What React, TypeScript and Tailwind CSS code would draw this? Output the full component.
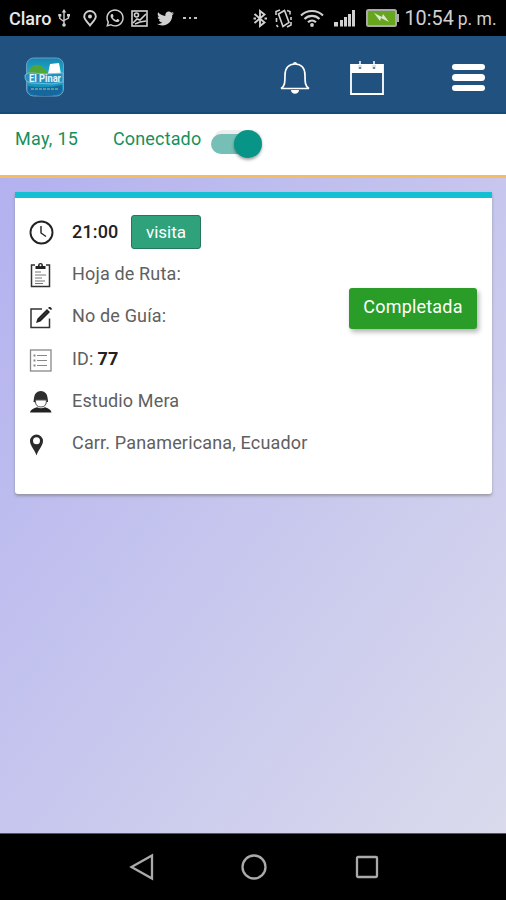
import type { ReactNode } from 'react';
import { FaWhatsapp, FaTwitter } from 'react-icons/fa';

function StatusBar() {
  return (
    <div className="flex h-9 items-center bg-black text-[#d0d0d0]">
      <span className="ml-[9px] w-[47px] pt-[2px] text-[18px] font-medium leading-none whitespace-nowrap text-[#e8e8e8]">Claro</span>
      <svg className="ml-[1px] h-[18px] w-[14px]" viewBox="0 0 14 18" fill="none" stroke="currentColor" strokeWidth="1.4">
        <path d="M7 3v12M2.8 6.5v3l4.2 3M11.5 6v3L7 11.5" />
        <path d="m7 0 2.3 3.5H4.7zM1.3 5h3v2.5h-3zM10 5h3v2.5h-3z" fill="currentColor" stroke="none" />
        <circle cx="7" cy="16" r="1.8" fill="currentColor" stroke="none" />
      </svg>
      <svg className="ml-[12px] h-[17px] w-[14px]" viewBox="0 0 14 17" fill="none" stroke="currentColor" strokeWidth="1.9">
        <path d="M7 15.500C4.7 12.500 1.200 9.500 1.200 6.500a5.800 5.500 0 0 1 11.600 0c0 3-3.500 6-5.800 9Z" />
        <circle cx="7" cy="6.500" r="2" fill="currentColor" stroke="none" />
      </svg>
      <FaWhatsapp className="ml-[8px] size-[20px]" />
      <svg className="ml-[6px] size-[17px]" viewBox="0 0 17 17" fill="none" stroke="currentColor" strokeWidth="1.6">
        <rect x="1" y="1" width="15" height="15" />
        <circle cx="5.500" cy="5" r="2" />
        <path d="M2 13 6 9l3 1 6-6M4 14l5-2 6-1" />
      </svg>
      <FaTwitter className="ml-[9px] size-[17px]" />
      <span className="ml-[9px] flex gap-[3px]">
        <i className="size-[2.500px] bg-[#c0c0c0]" /><i className="size-[2.500px] bg-[#c0c0c0]" /><i className="size-[2.500px] bg-[#c0c0c0]" />
      </span>
      <svg className="ml-[56px] h-[19px] w-[14px]" viewBox="0 0 14 19" fill="none" stroke="currentColor" strokeWidth="1.900">
        <path d="m1.500 5 10 8.500L7 17V2l4.500 3.500L1.500 14" />
        <path d="M.5 9.500H3M11.500 9.500H14" strokeWidth="2" />
      </svg>
      <svg className="ml-[8px] h-[19px] w-[17px]" viewBox="0 0 17 19" fill="none" stroke="currentColor" strokeWidth="1.600">
        <path d="m3.500 5 6-3.500 4.500 12-6 4zM1 6V2.500L5 1M1.500 9v4M3 18l-1.500-2M12 1.500l3 1v3M16 8v3M12 18l4-2v-3" />
      </svg>
      <svg className="ml-[8px] h-[18px] w-[24px]" viewBox="0 0 24 18" fill="none" stroke="currentColor" strokeWidth="2.200">
        <path d="M1 6.500c6-6 16-6 22 0M4.500 10c4.200-4.200 10.800-4.200 15 0M8 13.300c2.300-2.200 5.700-2.200 8 0" />
        <circle cx="12" cy="16" r="1.900" fill="currentColor" stroke="none" />
      </svg>
      <svg className="ml-[10px] h-[18px] w-[22px]" viewBox="0 0 22 18" fill="currentColor">
        <path d="M0 13h4v4.500H0zM6 11h3v6.500H6zM10 8h3v9.500h-3zM14 5h3v12.500h-3zM18 1h3v16.500h-3z" />
      </svg>
      <svg className="ml-[10px] h-[18px] w-[33px]" viewBox="0 0 33 18">
        <rect x="1" y="1" width="29" height="16" rx="1.500" fill="#68a51e" stroke="#aaa" strokeWidth="2" />
        <path d="M31 5h2v8h-2z" fill="#aaa" />
        <path d="m8 4 8 4 1-3 6 8-8-4-1 3z" fill="#dce8d0" />
      </svg>
      <span className="ml-[6px] pt-[2px] text-[19.800px] leading-none whitespace-nowrap">10:54</span>
      <span className="ml-[4px] pt-[3px] text-[17.500px] leading-none whitespace-nowrap">p. m.</span>
    </div>
  );
}

function Logo() {
  return (
    <svg className="mt-[-1px] ml-[23px] h-[40px] w-[42px]" viewBox="0 0 42 40">
      <defs>
        <linearGradient id="sky" x2="0" y2="1"><stop stopColor="#1686b1" /><stop offset=".5" stopColor="#20b4d2" /><stop offset="1" stopColor="#146da6" /></linearGradient>
      </defs>
      <rect x="3.500" y="1" width="37" height="38" rx="7" fill="url(#sky)" stroke="#6a9fc4" />
      <path d="M5 16C9 5 18 5 25 16z" fill="#50a638" />
      <path d="m27 7 9-1 2 11H25z" fill="#fff" />
      <path d="M2 18q3-3 8-2l12 1 18-1v9l-11 2-19-1q-9 0-8-8Z" fill="#2590bf" stroke="#8ac5dd" strokeWidth=".8" />
      <text x="6" y="25" fontSize="10" fontWeight="700" fill="#e2f7fc" textLength="32" lengthAdjust="spacingAndGlyphs">El Pinar</text>
      <path d="M5 29q18 3 34-1v6q-4 5-17 5T5 34z" fill="#17679f" />
      <path d="M8 32h27" stroke="#579c99" strokeWidth="1.800" strokeDasharray="3 1" />
    </svg>
  );
}

function Header() {
  return (
    <header className="flex h-[78px] items-center border-b-2 border-[#114c7c] bg-[#21527f] pt-[7px] text-white">
      <Logo />
      <svg className="ml-[214px] h-[34px] w-[32px]" viewBox="0 0 32 34" fill="none" stroke="currentColor" strokeWidth="1.700">
        <path d="M2 27.500c4-2 4-7 4-13C6 7 10 3 16 3s10 4 10 11.500c0 6 0 11 4 13z" />
        <path d="M14 3a2 2 0 0 1 4 0M12 29h8c0 5-8 5-8 0Z" fill="currentColor" stroke="none" />
      </svg>
      <svg className="ml-[39px] h-[34px] w-[34px]" viewBox="0 0 34 34" fill="none">
        <path d="M1 4h32v29H1z" stroke="currentColor" strokeWidth="1.800" />
        <path d="M1 3h32v9H1z" fill="currentColor" />
        <path d="M10 4v4M24 4v4" stroke="#67849f" strokeWidth="2.400" />
        <path d="M10 0v6M24 0v6" stroke="#fff" strokeWidth="1.500" />
      </svg>
      <div className="ml-[68px] flex w-[33px] flex-col gap-[4px]">
        <i className="h-[6.500px] rounded-full bg-white" />
        <i className="h-[6.500px] rounded-full bg-white" />
        <i className="h-[6.500px] rounded-full bg-white" />
      </div>
    </header>
  );
}

function Row({ icon, children }: { icon: ReactNode; children: ReactNode }) {
  return (
    <div className="flex h-[42.200px] items-center">
      <div className="flex w-[43px] shrink-0 items-center">{icon}</div>
      <div className="flex items-center text-[18px] leading-none tracking-[0.160px] whitespace-nowrap text-[#606060]">{children}</div>
    </div>
  );
}

const clock = (
  <svg className="size-[25px]" viewBox="0 0 25 25" fill="none" stroke="#222">
    <circle cx="12.500" cy="12.500" r="11" strokeWidth="1.900" />
    <path d="M12 6v7l5 3.500" strokeWidth="1.400" />
  </svg>
);
const clipboard = (
  <svg className="mt-[2px] ml-[1px] h-[26px] w-[21px]" viewBox="0 0 21 26" fill="none" stroke="#333">
    <path d="M5 3H1.500v21.500h18V3H16" strokeWidth="1.500" />
    <path d="M5.500 7V4H8a2.500 3 0 0 1 5 0h2.500v3z" fill="#222" stroke="none" />
    <circle cx="10.500" cy="3.300" r="1" fill="#fff" stroke="none" />
    <path d="M5 10h6M5 13h11M5 16h7M5 19h10M5 21.500h8" stroke="#777" />
  </svg>
);
const edit = (
  <svg className="mt-[3px] ml-[1px] size-[22px]" viewBox="0 0 22 22" fill="none">
    <path d="M12 2H1v18.500h18.500v-9" stroke="#333" strokeWidth="1.500" />
    <path d="m6 16 1.500-4.500L17 2l3 3-9.500 9.500zM18 1l1-1q2-.5 3 2l-1 1z" fill="#222" />
    <path d="m9.500 12.500 8-8" stroke="#555" strokeWidth=".6" />
  </svg>
);
const list = (
  <svg className="mt-[4px] size-[23px]" viewBox="0 0 23 23" fill="none" stroke="#888">
    <rect x="1.500" y="1" width="20.500" height="21" strokeWidth="1.300" />
    <path d="M8 6.500h10M8 11.500h10M8 16.500h10" strokeWidth="1.200" />
    <path d="M4.500 6.500h2M4.500 11.500h2M4.500 16.500h2" strokeWidth="1.800" />
  </svg>
);
const person = (
  <svg className="mt-[2px] ml-[1px] h-[22px] w-[23px]" viewBox="0 0 23 22">
    <path d="M3.500 11 4 7a6.800 7 0 0 1 13.600 0l.5 4H16l-10 .5z" fill="#2e2e2e" />
    <path d="M5.500 9h10.800v2c0 3-2 5-5.400 5s-5.400-2-5.400-5z" fill="#fff" stroke="#555" />
    <path d="M0 21.500q.5-3.500 7-5.200 4 2 8 0 6 1.700 6.500 5.200z" fill="#222" />
  </svg>
);
const marker = (
  <svg className="mt-[3px] h-[22px] w-[15px]" viewBox="0 0 15 22">
    <path d="M7.500 21.500C5.500 15.500 1 11.500 1 7a6.500 6.500 0 0 1 13 0c0 4.500-4.500 8.500-6.500 14.500Z" fill="#2b2b2b" />
    <circle cx="7.500" cy="6.800" r="3.500" fill="#fff" />
  </svg>
);

function VisitCard() {
  return (
    <article className="relative ml-[15px] h-[302px] w-[477px] rounded-b-[3px] border-t-[6px] border-[#13c0d3] bg-white pt-[13px] pl-[14px] shadow-[0_2px_3px_rgba(120,120,120,0.6)]">
      <Row icon={clock}>
        <b className="w-[59px] font-medium text-[#222]">21:00</b>
        <span className="flex h-[34px] w-[70px] items-center justify-center rounded-[3px] border border-[#26765b] bg-[#2fa27c] text-[17px] tracking-normal text-white">visita</span>
      </Row>
      <Row icon={clipboard}>Hoja de Ruta:</Row>
      <Row icon={edit}>No de Guía:</Row>
      <Row icon={list}>ID:<b className="ml-[4px] font-bold text-[#222]">77</b></Row>
      <Row icon={person}>Estudio Mera</Row>
      <Row icon={marker}>Carr. Panamericana, Ecuador</Row>
      <button className="absolute top-[90px] right-[15px] flex h-[41px] w-[128px] items-center justify-center rounded-[3px] bg-[#2a9d28] pb-[4px] text-[18px] tracking-[0.200px] text-white shadow-[2px_3px_5px_rgba(0,0,0,0.3)]">Completada</button>
    </article>
  );
}

export default function App() {
  return (
    <div className="flex h-[900px] w-[506px] flex-col overflow-hidden bg-black font-[Roboto,sans-serif]">
      <StatusBar />
      <Header />
      <div className="flex h-[64px] border-b-[3px] border-[#f3bd60] bg-white pt-[13px] pl-[15px] text-[18px] leading-[24px] tracking-[0.150px] text-[#16905d]">
        <span className="w-[98px] tracking-[0.300px]">May, 15</span>
        <span className="w-[98px] whitespace-nowrap">Conectado</span>
        <span className="mt-[7px] flex h-[20px] w-[50px] items-center rounded-full bg-[#75bfb7] shadow-[2px_-5px_1px_-1px_#ededed]">
          <i className="ml-[23px] size-[28px] shrink-0 rounded-full bg-[#089486] shadow-[0_2px_3px_rgba(0,0,0,0.35)]" />
        </span>
      </div>
      <main className="h-[655px] bg-linear-to-br from-[#b3b1ef] via-[#c6c6ee] to-[#dadaec] pt-[14px]">
        <VisitCard />
      </main>
      <nav className="flex flex-1 items-center border-t border-[#555563] bg-black">
        <svg className="ml-[129px] h-[28px] w-[26px]" viewBox="0 0 26 28" fill="none" stroke="#aaa" strokeWidth="2.300"><path d="M23 2.500v23L2.500 14z" /></svg>
        <svg className="ml-[85px] size-[28px]" viewBox="0 0 28 28" fill="none" stroke="#aaa" strokeWidth="2.300"><circle cx="14" cy="14" r="11.500" /></svg>
        <svg className="ml-[87px] size-[24px]" viewBox="0 0 24 24" fill="none" stroke="#aaa" strokeWidth="2.300"><rect x="2" y="2" width="20" height="20" rx="1" /></svg>
      </nav>
    </div>
  );
}
